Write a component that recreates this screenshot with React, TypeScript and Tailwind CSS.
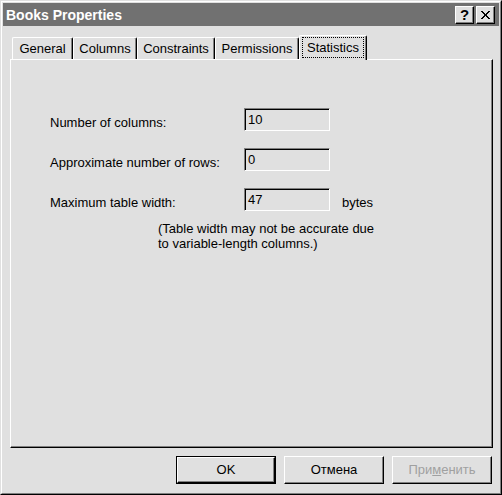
import React from "react";

const tabs = [
  { label: "General", w: "w-[61px]" },
  { label: "Columns", w: "w-[64px]" },
  { label: "Constraints", w: "w-[78px]" },
  { label: "Permissions", w: "w-[84px]" },
];

function Field({ value }: { value: string }) {
  return (
    <div className="w-[86px] h-[23px] border border-t-[#808080] border-l-[#808080] border-r-white border-b-white shadow-[inset_1px_1px_0_#000] pl-[3px] pt-[2px] leading-[17px]">
      {value}
    </div>
  );
}

export default function App() {
  return (
    <div className="w-[502px] h-[495px] bg-[#e0e0e0] font-['Liberation_Sans',Arial,sans-serif] text-[13px] text-black">
      <div className="h-full border border-t-[#e0e0e0] border-l-[#e0e0e0] border-r-black border-b-black">
        <div className="h-full border border-t-white border-l-white border-r-[#808080] border-b-[#808080] p-[1px] flex flex-col">
          {/* Title bar */}
          <div className="h-[23px] bg-[#717171] flex items-center pl-[3px] pr-[4px]">
            <div className="text-white font-bold text-[14px] leading-none flex-1">Books Properties</div>
            <div className="flex gap-[2px]">
              <div className="w-[19px] h-[18px] bg-[#e0e0e0] border border-t-white border-l-white border-r-black border-b-black shadow-[inset_-1px_-1px_0_#808080] flex items-center justify-center font-bold text-[15px] leading-none">
                ?
              </div>
              <div className="w-[19px] h-[18px] bg-[#e0e0e0] border border-t-white border-l-white border-r-black border-b-black shadow-[inset_-1px_-1px_0_#808080] flex items-center justify-center">
                <svg width="9" height="8" viewBox="0 0 9 8" shapeRendering="crispEdges">
                  <path d="M0 0h2v1h-2zM7 0h2v1h-2zM1 1h2v1h-2zM6 1h2v1h-2zM2 2h2v1h-2zM5 2h2v1h-2zM3 3h3v2h-3zM2 5h2v1h-2zM5 5h2v1h-2zM1 6h2v1h-2zM6 6h2v1h-2zM0 7h2v1h-2zM7 7h2v1h-2z" fill="#000" />
                </svg>
              </div>
            </div>
          </div>

          {/* Tabs + panel */}
          <div className="pl-[7px] pr-[6px] pt-[9px] flex flex-col">
            <div className="flex items-end h-[24px] pl-[2px] relative z-10">
              {tabs.map((t) => (
                <div
                  key={t.label}
                  className={`${t.w} h-[22px] border-l border-t border-r border-l-white border-t-white border-r-black rounded-t-[2px] shadow-[inset_-1px_0_0_#808080] flex items-center justify-center`}
                >
                  {t.label}
                </div>
              ))}
              <div className="w-[68px] h-[25px] -mb-[1px] bg-[#e0e0e0] border-l border-t border-r border-l-white border-t-white border-r-black rounded-t-[2px] shadow-[inset_-1px_0_0_#808080] flex items-start justify-center pt-[1px] px-[2px]">
                <div className="w-full h-[21px] border border-dotted border-black flex items-center justify-center">
                  Statistics
                </div>
              </div>
            </div>
            <div className="h-[389px] border border-t-white border-l-white border-r-black border-b-black shadow-[inset_-1px_-1px_0_#808080] pl-[39px] pt-[48px]">
              <div className="flex flex-col gap-[17px]">
                <div className="flex items-start">
                  <div className="w-[194px] pt-[7px] leading-[15px]">Number of columns:</div>
                  <Field value="10" />
                </div>
                <div className="flex items-start">
                  <div className="w-[194px] pt-[7px] leading-[15px]">Approximate number of rows:</div>
                  <Field value="0" />
                </div>
                <div className="flex items-start">
                  <div className="w-[194px] pt-[7px] leading-[15px]">Maximum table width:</div>
                  <Field value="47" />
                  <div className="ml-[12px] pt-[7px] leading-[15px]">bytes</div>
                </div>
              </div>
              <div className="pl-[108px] mt-[10px] leading-[15px]">
                (Table width may not be accurate due
                <br />
                to variable-length columns.)
              </div>
            </div>
          </div>

          {/* Buttons */}
          <div className="flex justify-end gap-[8px] pr-[7px] pt-[8px]">
            <div className="w-[100px] h-[28px] border border-black">
              <div className="h-full border border-t-white border-l-white border-r-black border-b-black shadow-[inset_-1px_-1px_0_#808080] flex items-center justify-center">
                OK
              </div>
            </div>
            <div className="w-[100px] h-[28px] border border-t-white border-l-white border-r-black border-b-black shadow-[inset_-1px_-1px_0_#808080] flex items-center justify-center">
              Отмена
            </div>
            <div className="w-[100px] h-[28px] border border-t-white border-l-white border-r-black border-b-black shadow-[inset_-1px_-1px_0_#808080] flex items-center justify-center text-[#a0a0a0]">
              При<span className="underline">м</span>енить
            </div>
          </div>
        </div>
      </div>
    </div>
  );
}
